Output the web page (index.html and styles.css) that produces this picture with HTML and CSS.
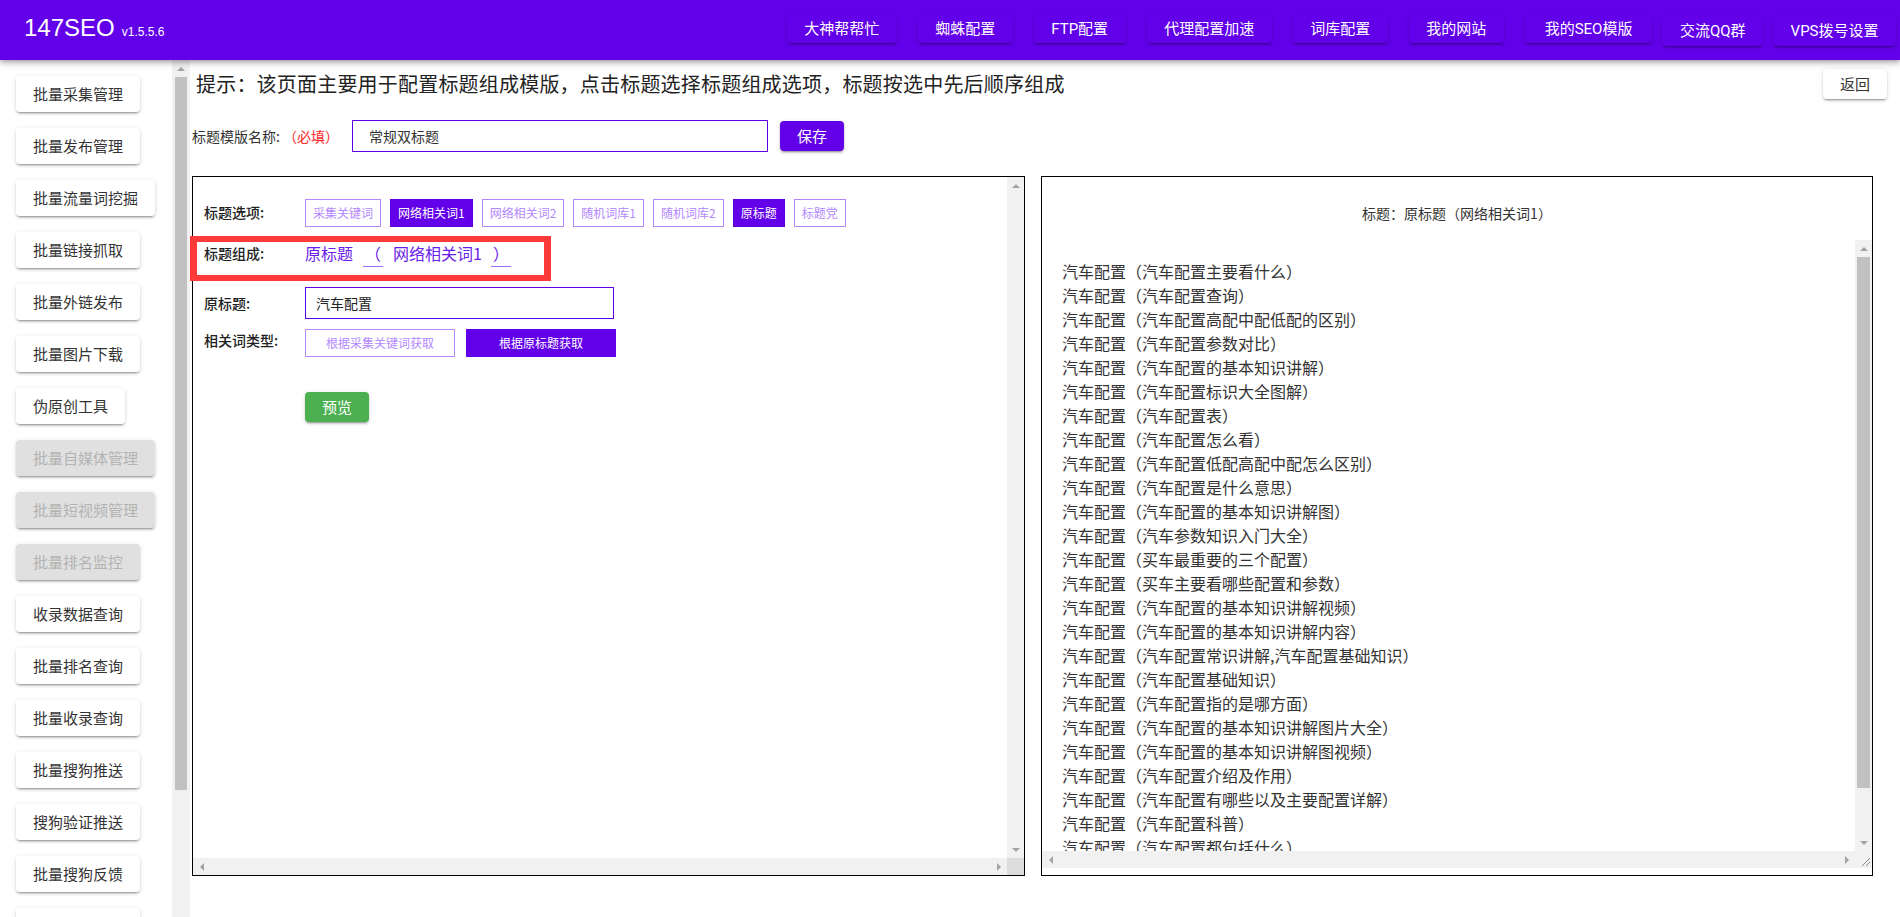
FILE: index.html
```html
<!DOCTYPE html>
<html lang="zh-CN">
<head>
<meta charset="utf-8">
<title>147SEO 标题模版</title>
<link rel="stylesheet" href="styles.css">
</head>
<body>
<header class="topbar">
  <div class="brand"><span class="brand-name">147SEO</span><span class="brand-ver">v1.5.5.6</span></div>
  <nav class="topnav">
    <button class="nav-btn">大神帮帮忙</button>
    <button class="nav-btn">蜘蛛配置</button>
    <button class="nav-btn">FTP配置</button>
    <button class="nav-btn">代理配置加速</button>
    <button class="nav-btn">词库配置</button>
    <button class="nav-btn">我的网站</button>
    <button class="nav-btn wide">我的SEO模版</button>
    <button class="nav-btn tall">交流QQ群</button>
    <button class="nav-btn tall">VPS拨号设置</button>
  </nav>
</header>
<div class="layout">
  <aside class="sidebar">
    <button class="side-btn">批量采集管理</button>
    <button class="side-btn">批量发布管理</button>
    <button class="side-btn">批量流量词挖掘</button>
    <button class="side-btn">批量链接抓取</button>
    <button class="side-btn">批量外链发布</button>
    <button class="side-btn">批量图片下载</button>
    <button class="side-btn">伪原创工具</button>
    <button class="side-btn disabled">批量自媒体管理</button>
    <button class="side-btn disabled">批量短视频管理</button>
    <button class="side-btn disabled">批量排名监控</button>
    <button class="side-btn">收录数据查询</button>
    <button class="side-btn">批量排名查询</button>
    <button class="side-btn">批量收录查询</button>
    <button class="side-btn">批量搜狗推送</button>
    <button class="side-btn">搜狗验证推送</button>
    <button class="side-btn">批量搜狗反馈</button>
    <button class="side-btn">批量神马推送</button>
  </aside>
  <div class="vbar side-bar">
    <div class="sbtn"><span class="arrow-up"></span></div>
    <div class="thumb side-thumb"></div>
  </div>
  <main class="main">
    <div class="hint-row">
      <p class="hint">提示：该页面主要用于配置标题组成模版，点击标题选择标题组成选项，标题按选中先后顺序组成</p>
      <button class="back-btn">返回</button>
    </div>
    <div class="name-row">
      <label class="name-label">标题模版名称: <span class="required">（必填）</span></label>
      <input class="name-input" type="text" value="常规双标题">
      <button class="save-btn">保存</button>
    </div>
    <div class="panels">
      <section class="panel left-panel">
        <div class="left-content">
          <div class="form-row row-options">
            <span class="form-label">标题选项:</span>
            <div class="opts">
              <button class="opt">采集关键词</button>
              <button class="opt on">网络相关词1</button>
              <button class="opt">网络相关词2</button>
              <button class="opt">随机词库1</button>
              <button class="opt">随机词库2</button>
              <button class="opt on">原标题</button>
              <button class="opt">标题党</button>
            </div>
          </div>
          <div class="form-row row-compose">
            <span class="form-label">标题组成:</span>
            <div class="compose">
              <span class="part">原标题</span>
              <span class="sep">（</span>
              <span class="part">网络相关词1</span>
              <span class="sep sep-last">）</span>
            </div>
          </div>
          <div class="form-row row-source">
            <span class="form-label">原标题:</span>
            <input class="source-input" type="text" value="汽车配置">
          </div>
          <div class="form-row row-type">
            <span class="form-label">相关词类型:</span>
            <div class="type-btns">
              <button class="type-btn">根据采集关键词获取</button>
              <button class="type-btn on">根据原标题获取</button>
            </div>
          </div>
          <div class="row-preview">
            <button class="preview-btn">预览</button>
          </div>
        </div>
        <div class="vbar panel-vbar">
          <div class="sbtn"><span class="arrow-up"></span></div>
          <div class="track-fill"></div>
          <div class="sbtn"><span class="arrow-down"></span></div>
        </div>
        <div class="hbar">
          <div class="sbtn-h"><span class="arrow-left"></span></div>
          <div class="track-fill"></div>
          <div class="sbtn-h"><span class="arrow-right"></span></div>
        </div>
        <div class="corner"></div>
        <div class="mark"></div>
      </section>
      <section class="panel right-panel">
        <div class="preview-title">标题：原标题（网络相关词1）</div>
        <div class="result-box">
          <div class="result-list">
            <div>汽车配置（汽车配置主要看什么）</div>
            <div>汽车配置（汽车配置查询）</div>
            <div>汽车配置（汽车配置高配中配低配的区别）</div>
            <div>汽车配置（汽车配置参数对比）</div>
            <div>汽车配置（汽车配置的基本知识讲解）</div>
            <div>汽车配置（汽车配置标识大全图解）</div>
            <div>汽车配置（汽车配置表）</div>
            <div>汽车配置（汽车配置怎么看）</div>
            <div>汽车配置（汽车配置低配高配中配怎么区别）</div>
            <div>汽车配置（汽车配置是什么意思）</div>
            <div>汽车配置（汽车配置的基本知识讲解图）</div>
            <div>汽车配置（汽车参数知识入门大全）</div>
            <div>汽车配置（买车最重要的三个配置）</div>
            <div>汽车配置（买车主要看哪些配置和参数）</div>
            <div>汽车配置（汽车配置的基本知识讲解视频）</div>
            <div>汽车配置（汽车配置的基本知识讲解内容）</div>
            <div>汽车配置（汽车配置常识讲解,汽车配置基础知识）</div>
            <div>汽车配置（汽车配置基础知识）</div>
            <div>汽车配置（汽车配置指的是哪方面）</div>
            <div>汽车配置（汽车配置的基本知识讲解图片大全）</div>
            <div>汽车配置（汽车配置的基本知识讲解图视频）</div>
            <div>汽车配置（汽车配置介绍及作用）</div>
            <div>汽车配置（汽车配置有哪些以及主要配置详解）</div>
            <div>汽车配置（汽车配置科普）</div>
            <div>汽车配置（汽车配置都包括什么）</div>
            <div>汽车配置（汽车配置有哪些）</div>
            <div>汽车配置（汽车配置参数详解）</div>
          </div>
          <div class="vbar list-vbar">
            <div class="sbtn"><span class="arrow-up"></span></div>
            <div class="thumb list-thumb"></div>
            <div class="track-fill"></div>
            <div class="sbtn"><span class="arrow-down"></span></div>
          </div>
          <div class="hbar">
            <div class="sbtn-h"><span class="arrow-left"></span></div>
            <div class="track-fill"></div>
            <div class="sbtn-h"><span class="arrow-right"></span></div>
          </div>
          <div class="corner grip">
            <svg width="17" height="17" viewBox="0 0 17 17"><path d="M15 7 L7 15 M15 11 L11 15" stroke="#8a8a8a" stroke-width="1" fill="none"/></svg>
          </div>
        </div>
      </section>
    </div>
  </main>
</div>
</body>
</html>
```

FILE: styles.css
```css
* { box-sizing: border-box; }
html, body { margin: 0; padding: 0; }
body {
  width: 1900px;
  height: 917px;
  overflow: hidden;
  background: #fff;
  color: #333;
  font-family: "Noto Sans CJK SC", "Liberation Sans", sans-serif;
}
button {
  border: 0;
  padding: 0;
  margin: 0;
  font-family: inherit;
  cursor: pointer;
  white-space: nowrap;
}

/* ---------- top bar ---------- */
.topbar {
  position: relative;
  z-index: 3;
  height: 60px;
  display: flex;
  align-items: flex-start;
  padding-left: 24px;
  background: #6200ea;
  color: #fff;
  box-shadow: 0 2px 4px -1px rgba(0,0,0,.2), 0 4px 5px 0 rgba(0,0,0,.14), 0 1px 10px 0 rgba(0,0,0,.12);
}
.brand {
  display: flex;
  align-items: baseline;
  line-height: 56px;
  font-family: "Liberation Sans", Arial, sans-serif;
  white-space: nowrap;
}
.brand-name { font-size: 24px; }
.brand-ver { font-size: 12px; margin-left: 7px; }
.topnav {
  margin-left: auto;
  display: flex;
  align-items: flex-start;
  padding-top: 15px;
  padding-right: 4px;
}
.nav-btn {
  height: 28px;
  line-height: 28px;
  padding: 0 17.5px;
  margin-left: 21px;
  font-size: 15px;
  font-family: Roboto, "Noto Sans CJK SC", sans-serif;
  color: #fff;
  background: #6200ea;
  border-radius: 4px;
  box-shadow: 0 3px 1px -2px rgba(0,0,0,.2), 0 2px 2px 0 rgba(0,0,0,.14), 0 1px 5px 0 rgba(0,0,0,.12);
}
.nav-btn.wide { padding: 0 20px; }
.nav-btn.tall {
  height: 30px;
  line-height: 30px;
  margin-left: 10px;
  margin-top: 1px;
}

/* ---------- layout ---------- */
.layout {
  display: flex;
  height: 857px;
}
.sidebar {
  width: 172px;
  flex-shrink: 0;
  padding: 16px 0 0 16px;
  overflow: hidden;
  display: flex;
  flex-direction: column;
  align-items: flex-start;
  gap: 16px;
}
.side-btn {
  flex-shrink: 0;
  height: 36px;
  line-height: 36px;
  padding: 0 17px;
  font-size: 15px;
  color: #333;
  background: #fff;
  border-radius: 4px;
  box-shadow: 0 3px 1px -2px rgba(0,0,0,.2), 0 2px 2px 0 rgba(0,0,0,.14), 0 1px 5px 0 rgba(0,0,0,.12);
}
.side-btn.disabled {
  background: #e0e0e0;
  color: #b3b3b3;
}

/* ---------- fake scrollbars ---------- */
.vbar {
  width: 17px;
  flex-shrink: 0;
  background: #f1f1f1;
  display: flex;
  flex-direction: column;
}
.hbar {
  height: 17px;
  background: #f1f1f1;
  display: flex;
}
.sbtn {
  height: 17px;
  flex-shrink: 0;
  display: flex;
  align-items: center;
  justify-content: center;
}
.sbtn-h {
  width: 17px;
  flex-shrink: 0;
  display: flex;
  align-items: center;
  justify-content: center;
}
.track-fill { flex: 1; }
.thumb {
  background: #c1c1c1;
  margin: 0 2px;
  flex-shrink: 0;
}
.arrow-up, .arrow-down, .arrow-left, .arrow-right { width: 0; height: 0; }
.arrow-up {
  border-left: 4px solid transparent;
  border-right: 4px solid transparent;
  border-bottom: 4px solid #a3a3a3;
}
.arrow-down {
  border-left: 4px solid transparent;
  border-right: 4px solid transparent;
  border-top: 4px solid #a3a3a3;
}
.arrow-left {
  border-top: 4px solid transparent;
  border-bottom: 4px solid transparent;
  border-right: 4px solid #a3a3a3;
}
.arrow-right {
  border-top: 4px solid transparent;
  border-bottom: 4px solid transparent;
  border-left: 4px solid #a3a3a3;
}
.corner { background: #dcdcdc; }
.corner.grip { background: #f1f1f1; display: flex; }

.side-bar { width: 18px; }
.side-thumb { height: 713px; margin: 0 3px; }

/* ---------- main ---------- */
.main {
  flex: 1;
  min-width: 0;
  padding-left: 2px;
}
.hint-row {
  display: flex;
  align-items: flex-start;
  padding-top: 9px;
  padding-right: 13px;
}
.hint {
  margin: 0 0 0 4px;
  font-size: 20px;
  line-height: 30px;
  letter-spacing: 0.2px;
  color: #222;
}
.back-btn, .save-btn, .preview-btn {
  width: 64px;
  height: 30px;
  line-height: 30px;
  font-size: 15px;
  border-radius: 4px;
  box-shadow: 0 3px 1px -2px rgba(0,0,0,.2), 0 2px 2px 0 rgba(0,0,0,.14), 0 1px 5px 0 rgba(0,0,0,.12);
}
.back-btn {
  margin-left: auto;
  background: #fff;
  color: #333;
}
.save-btn {
  margin-left: 12px;
  background: #6200ea;
  color: #fff;
}
.preview-btn {
  background: #4caf50;
  color: #fff;
}

.name-row {
  display: flex;
  align-items: center;
  margin-top: 21px;
}
.name-label {
  width: 160px;
  flex-shrink: 0;
  font-size: 14px;
  line-height: 20px;
  white-space: nowrap;
  color: #333;
}
.required { color: #ff2727; }
.name-input {
  width: 416px;
  height: 32px;
  border: 1px solid #6200ea;
  padding: 0 16px;
  font-size: 14px;
  font-family: inherit;
  color: #333;
  outline: none;
}

/* ---------- panels ---------- */
.panels {
  display: flex;
  gap: 16px;
  margin-top: 24px;
  margin-right: 27px;
  height: 700px;
}
.panel {
  position: relative;
  border: 1px solid #000;
  flex-shrink: 0;
}
.left-panel {
  width: 833px;
  display: grid;
  grid-template-columns: 1fr 17px;
  grid-template-rows: 1fr 17px;
}
.left-content {
  overflow: hidden;
  padding: 22px 0 0 11px;
}
.form-row {
  display: flex;
  align-items: center;
}
.form-label {
  width: 101px;
  flex-shrink: 0;
  font-size: 14px;
  line-height: 22px;
  font-weight: 500;
  color: #222;
}
.row-options .form-label { margin-top: -3px; }
.opts { display: flex; gap: 9px; }
.opt {
  height: 28px;
  line-height: 26px;
  padding: 0 7px;
  font-size: 12px;
  border: 1px solid #b388ff;
  color: #b388ff;
  background: #fff;
}
.opt.on {
  background: #6200ea;
  border-color: #6200ea;
  color: #fff;
}
.row-compose {
  height: 32px;
  margin-top: 10px;
}
.compose {
  display: flex;
  align-items: center;
}
.part {
  font-size: 16px;
  line-height: 26px;
  color: #6a1de8;
}
.sep {
  width: 20px;
  margin: 0 10px;
  font-size: 16px;
  line-height: 26px;
  text-align: center;
  color: #6a1de8;
  border-bottom: 1px solid #9a6cf5;
}
.sep-last { margin: 0 0 0 9px; }
.row-source { margin-top: 18px; }
.source-input {
  width: 309px;
  height: 32px;
  border: 1px solid #6200ea;
  padding: 0 10px;
  font-size: 14px;
  font-family: inherit;
  color: #222;
  outline: none;
}
.row-type {
  margin-top: 10px;
  align-items: flex-start;
}
.type-btns { display: flex; gap: 11px; }
.type-btn {
  width: 150px;
  height: 28px;
  line-height: 26px;
  font-size: 12px;
  border: 1px solid #b388ff;
  color: #b388ff;
  background: #fff;
}
.type-btn.on {
  background: #6200ea;
  border-color: #6200ea;
  color: #fff;
}
.row-preview {
  margin-top: 35px;
  padding-left: 101px;
}
.mark {
  position: absolute;
  left: -3px;
  top: 59px;
  width: 361px;
  height: 45px;
  border-style: solid;
  border-color: #fd3a3a;
  border-width: 6px 7px;
  pointer-events: none;
  z-index: 2;
}

.right-panel {
  width: 832px;
  display: flex;
  flex-direction: column;
}
.preview-title {
  text-align: center;
  font-size: 14px;
  line-height: 20px;
  padding: 26px 0 17px;
  color: #333;
}
.result-box {
  height: 628px;
  display: grid;
  grid-template-columns: 1fr 17px;
  grid-template-rows: 1fr 17px;
}
.result-list {
  overflow: hidden;
  padding: 19px 20px 0;
  font-size: 16px;
  line-height: 24px;
  color: #333;
  white-space: nowrap;
}
.list-vbar { width: 17px; }
.list-thumb { height: 531px; }
```
